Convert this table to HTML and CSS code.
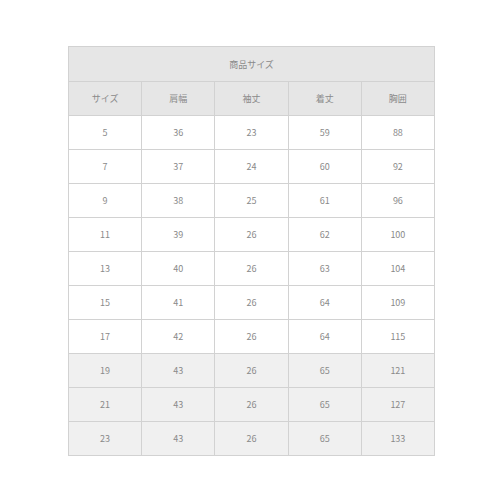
FILE: index.html
```html
<!DOCTYPE html>
<html lang="ja">
<head>
<meta charset="utf-8">
<link rel="stylesheet" href="styles.css">
</head>
<body>
<table class="size-table">
  <tr class="head"><th colspan="5">商品サイズ</th></tr>
  <tr class="head"><th>サイズ</th><th>肩幅</th><th>袖丈</th><th>着丈</th><th>胸囲</th></tr>
  <tr><td>5</td><td>36</td><td>23</td><td>59</td><td>88</td></tr>
  <tr><td>7</td><td>37</td><td>24</td><td>60</td><td>92</td></tr>
  <tr><td>9</td><td>38</td><td>25</td><td>61</td><td>96</td></tr>
  <tr><td>11</td><td>39</td><td>26</td><td>62</td><td>100</td></tr>
  <tr><td>13</td><td>40</td><td>26</td><td>63</td><td>104</td></tr>
  <tr><td>15</td><td>41</td><td>26</td><td>64</td><td>109</td></tr>
  <tr><td>17</td><td>42</td><td>26</td><td>64</td><td>115</td></tr>
  <tr class="shade"><td>19</td><td>43</td><td>26</td><td>65</td><td>121</td></tr>
  <tr class="shade"><td>21</td><td>43</td><td>26</td><td>65</td><td>127</td></tr>
  <tr class="shade"><td>23</td><td>43</td><td>26</td><td>65</td><td>133</td></tr>
</table>
</body>
</html>
```
FILE: styles.css
```css
html, body {
  margin: 0;
  padding: 0;
  background: #ffffff;
}
body {
  padding: 46px 0 0 68px;
  font-family: "Noto Sans CJK JP", "Noto Sans", sans-serif;
}
.size-table {
  border-collapse: collapse;
  width: 367px;
  table-layout: fixed;
  color: #8a8a8a;
  font-size: 9px;
}
.size-table th,
.size-table td {
  border: 1px solid #d2d2d2;
  text-align: center;
  vertical-align: middle;
  font-weight: normal;
  padding: 0;
  height: 33px;
}
.size-table .head th {
  background: #e6e6e6;
}
.size-table .head:first-child th {
  height: 34px;
}
.size-table .shade td {
  background: #f0f0f0;
}
```
